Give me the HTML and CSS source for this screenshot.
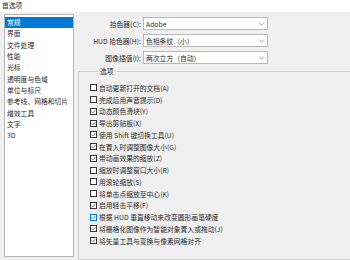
FILE: index.html
```html
<!DOCTYPE html>
<html lang="zh-CN">
<head>
  <meta charset="UTF-8" />
  <title>首选项</title>
  <link rel="stylesheet" href="styles.css">
</head>
<body>

<div class="titlebar">首选项</div>

<div class="dialog">
  <ul class="nav">
    <li class="active">常规</li>
    <li>界面</li>
    <li>文件处理</li>
    <li>性能</li>
    <li>光标</li>
    <li>透明度与色域</li>
    <li>单位与标尺</li>
    <li>参考线、网格和切片</li>
    <li>增效工具</li>
    <li>文字</li>
    <li>3D</li>
  </ul>

  <div class="panel">
    <div class="fields">
      <label>拾色器(C):</label>
      <div class="select"><span>Adobe</span><svg class="arrow" viewBox="0 0 6 4"><polyline points="0.5,0.8 3,3.2 5.5,0.8" /></svg></div>

      <label>HUD 拾色器(H):</label>
      <div class="select"><span>色相条纹（小）</span><svg class="arrow" viewBox="0 0 6 4"><polyline points="0.5,0.8 3,3.2 5.5,0.8" /></svg></div>

      <label>图像插值(I):</label>
      <div class="select"><span>两次立方（自动）</span><svg class="arrow" viewBox="0 0 6 4"><polyline points="0.5,0.8 3,3.2 5.5,0.8" /></svg></div>
    </div>

    <fieldset class="options">
      <legend>选项</legend>
      <div class="check"><span class="box"></span>自动更新打开的文档(A)</div>
      <div class="check"><span class="box"></span>完成后用声音提示(D)</div>
      <div class="check"><span class="box"><svg viewBox="0 0 10 10"><polyline points="1.5,5 4,7.5 8.5,2.5" /></svg></span>动态颜色滑块(Y)</div>
      <div class="check"><span class="box"><svg viewBox="0 0 10 10"><polyline points="1.5,5 4,7.5 8.5,2.5" /></svg></span>导出剪贴板(X)</div>
      <div class="check"><span class="box"><svg viewBox="0 0 10 10"><polyline points="1.5,5 4,7.5 8.5,2.5" /></svg></span>使用 Shift 键切换工具(U)</div>
      <div class="check"><span class="box"><svg viewBox="0 0 10 10"><polyline points="1.5,5 4,7.5 8.5,2.5" /></svg></span>在置入时调整图像大小(G)</div>
      <div class="check"><span class="box"><svg viewBox="0 0 10 10"><polyline points="1.5,5 4,7.5 8.5,2.5" /></svg></span>带动画效果的缩放(Z)</div>
      <div class="check"><span class="box"></span>缩放时调整窗口大小(R)</div>
      <div class="check"><span class="box"></span>用滚轮缩放(S)</div>
      <div class="check"><span class="box"></span>将单击点缩放至中心(K)</div>
      <div class="check"><span class="box"><svg viewBox="0 0 10 10"><polyline points="1.5,5 4,7.5 8.5,2.5" /></svg></span>启用轻击平移(F)</div>
      <div class="check"><span class="box focus"><svg viewBox="0 0 10 10"><polyline points="1.5,5 4,7.5 8.5,2.5" /></svg></span>根据 HUD 垂直移动来改变圆形画笔硬度</div>
      <div class="check"><span class="box"><svg viewBox="0 0 10 10"><polyline points="1.5,5 4,7.5 8.5,2.5" /></svg></span>将栅格化图像作为智能对象置入或拖动(J)</div>
      <div class="check"><span class="box"><svg viewBox="0 0 10 10"><polyline points="1.5,5 4,7.5 8.5,2.5" /></svg></span>将矢量工具与变换与像素网格对齐</div>
    </fieldset>
  </div>
</div>

</body>
</html>
```

FILE: styles.css
```css
html, body {
  margin: 0;
  width: 350px;
  height: 260px;
  overflow: hidden;
}
body {
  font-family: "Noto Sans CJK SC", "Noto Sans", sans-serif;
  font-size: 6.8px;
  color: #2a2a2a;
  background: #f0f0f0;
}
.titlebar {
  height: 12px;
  line-height: 11px;
  padding-left: 2px;
  background: #ffffff;
}
.dialog {
  display: flex;
  align-items: flex-start;
  padding: 2px 0 0 4px;
}
.nav {
  width: 70px;
  height: 243px;
  box-sizing: border-box;
  margin: 0;
  padding: 2px 0 0 0;
  list-style: none;
  background: #ffffff;
  border: 1px solid #b4b4b4;
  flex-shrink: 0;
}
.nav li {
  height: 11.33px;
  line-height: 11.33px;
  padding-left: 2px;
  white-space: nowrap;
}
.nav li.active {
  background: #0078d7;
  color: #ffffff;
}
.panel {
  margin-left: 4px;
  flex: 1;
  min-width: 0;
}
.fields {
  display: grid;
  grid-template-columns: 63px 125px;
  column-gap: 2px;
  row-gap: 4px;
  padding-top: 3px;
  align-items: center;
}
.fields label {
  text-align: right;
  white-space: nowrap;
}
.select {
  height: 13px;
  box-sizing: border-box;
  display: flex;
  align-items: center;
  justify-content: space-between;
  padding: 0 3px 0 2px;
  background: #ffffff;
  border: 1px solid #b9b9b9;
}
.arrow {
  width: 5px;
  height: 4px;
  fill: none;
  stroke: #707070;
  stroke-width: 0.9;
}
.options {
  min-width: 0;
  margin: 3px 0 0 0;
  padding: 7px 0 12px 11px;
  border: 1px solid #cdcdcd;
  border-right: none;
}
.options legend {
  margin-left: 8px;
  padding: 0 2px;
  line-height: 8px;
}
.check {
  display: flex;
  align-items: center;
  height: 11.75px;
  white-space: nowrap;
}
.box {
  width: 7px;
  height: 7px;
  box-sizing: border-box;
  margin-right: 2px;
  border: 1px solid #333333;
  background: #ffffff;
  display: flex;
  align-items: center;
  justify-content: center;
}
.box svg {
  width: 5px;
  height: 5px;
  fill: none;
  stroke: #333333;
  stroke-width: 1.5;
}
.box.focus {
  border-color: #0078d7;
}
.box.focus svg {
  stroke: #0060b0;
}
```
